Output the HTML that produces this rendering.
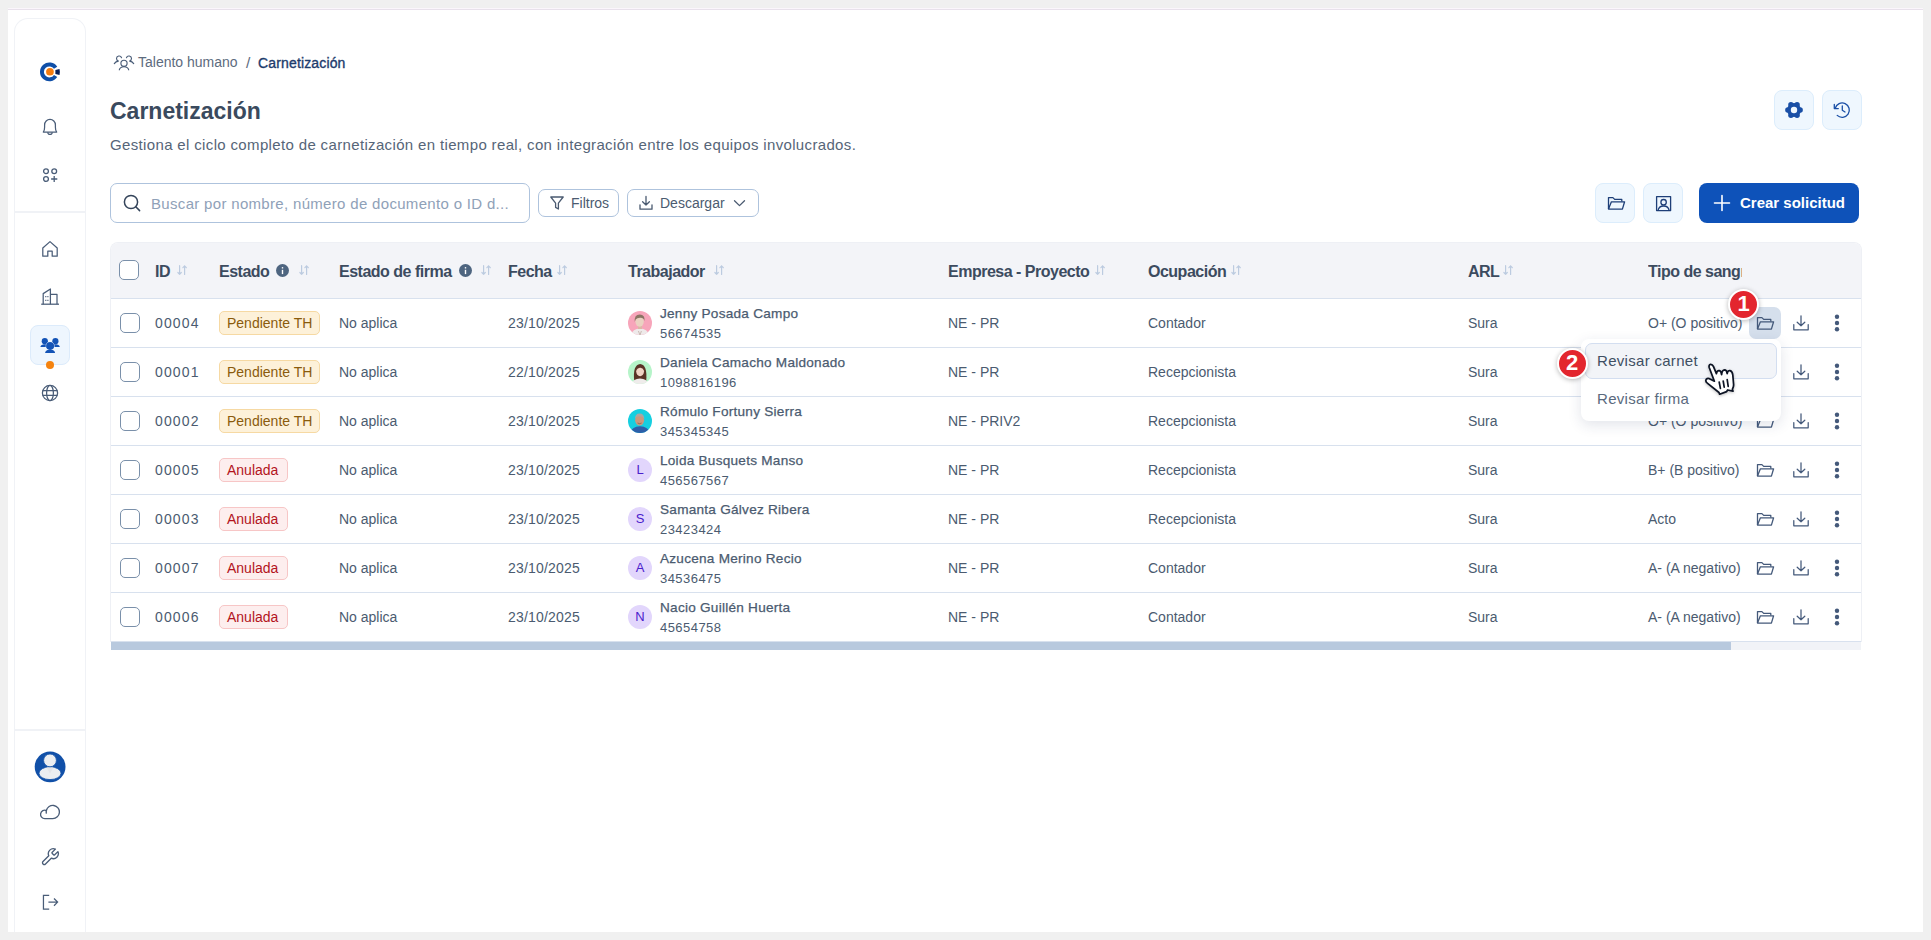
<!DOCTYPE html>
<html><head><meta charset="utf-8">
<style>
*{box-sizing:border-box;margin:0;padding:0}
html,body{width:1931px;height:940px;overflow:hidden;background:#f0f0f0;font-family:"Liberation Sans",sans-serif;color:#4a5a6e}
.abs{position:absolute}
#panel{position:absolute;left:8px;top:8px;width:1915px;height:924px;background:#fff;border-top:1px solid #fbf6fc;overflow:hidden}
#side{position:absolute;left:14px;top:18px;width:72px;height:914px;border:1.5px solid #f0f2f6;border-bottom:none;border-radius:14px 14px 0 0;background:#fff}
.sep{position:absolute;left:15px;width:70px;height:2px;background:#f0f2f6}
.ic{position:absolute;display:block}
.t{position:absolute;white-space:nowrap;line-height:1}
</style></head>
<body>
<div id="panel"><div style="position:absolute;left:0;top:0;width:1915px;height:1px;background:#e8e1eb"></div></div>
<div id="side"></div>
<div class="sep" style="top:211px"></div>
<div class="sep" style="top:729px"></div>

<!-- logo -->
<svg class="ic" style="left:38px;top:59.6px" width="24" height="24" viewBox="0 0 24 24">
  <path d="M19.24 6.71 A9.4 9.4 0 1 0 19.24 17.09 L15.99 14.94 A5.5 5.5 0 1 1 15.99 8.86 Z" fill="#0f4fa8"/>
  <circle cx="11.95" cy="11.75" r="3.85" fill="#f57c0f"/>
  <path d="M17.4 9.9 L21.5 9 Q22.3 12 21.5 15 L17.4 14.1 Z" fill="#071f5a"/>
</svg>
<!-- bell -->
<svg class="ic" style="left:40px;top:116px" width="20" height="20" viewBox="0 0 20 20" fill="none" stroke="#4a5d78" stroke-width="1.25" stroke-linejoin="round">
  <path d="M3.3 16.1 Q4.6 14.6 4.6 11.2 V9 A5.4 5.6 0 0 1 15.4 9 V11.2 Q15.4 14.6 16.7 16.1 Z"/>
  <path d="M7.8 16.2 A2.2 2.2 0 0 0 12.2 16.2"/>
</svg>
<!-- apps -->
<svg class="ic" style="left:40px;top:165px" width="20" height="20" viewBox="0 0 20 20" fill="none" stroke="#4a5d78" stroke-width="1.3">
  <circle cx="6" cy="6.2" r="2.4"/><circle cx="14.2" cy="6.2" r="2.4"/><circle cx="6" cy="14" r="2.4"/>
  <path d="M14.2 10.9 V17.1 M11.1 14 H17.3"/>
</svg>
<!-- home -->
<svg class="ic" style="left:40px;top:239px" width="20" height="20" viewBox="0 0 20 20" fill="none" stroke="#4a5d78" stroke-width="1.25" stroke-linejoin="round">
  <path d="M2.8 9 L10 2.6 L17.2 9 V17.2 H12.2 V12.2 H7.8 V17.2 H2.8 Z"/>
</svg>
<!-- building -->
<svg class="ic" style="left:40px;top:287px" width="20" height="20" viewBox="0 0 20 20" fill="none" stroke="#4a5d78" stroke-width="1.25" stroke-linejoin="round">
  <path d="M1.2 17.2 H19"/>
  <path d="M3.2 17.2 V6.6 L10.4 2 V17.2"/>
  <path d="M10.4 7.4 H17 V17.2"/>
  <path d="M5.8 9 v1.3 M7.9 9 v1.3 M5.8 12.7 v1.3 M7.9 12.7 v1.3" stroke-width="1.1"/>
</svg>
<!-- people active -->
<div class="abs" style="left:30px;top:325px;width:40px;height:40px;border-radius:8px;background:#eef6fe;border:1px solid #dcebfb"></div>
<svg class="ic" style="left:36px;top:332px" width="28" height="28" viewBox="0 0 28 28" fill="#1353b6">
  <circle cx="8.8" cy="9.2" r="3.1"/><circle cx="19.4" cy="9.2" r="3.1"/>
  <path d="M4.4 15 Q4.9 12.2 8.8 12.2 Q11 12.2 12 13.4 L11.4 15 Z"/>
  <path d="M23.8 15 Q23.3 12.2 19.4 12.2 Q17.2 12.2 16.2 13.4 L16.8 15 Z"/>
  <g stroke="#eef6fe" stroke-width="1.3" paint-order="stroke">
  <circle cx="14.1" cy="14.1" r="3.8"/>
  <path d="M9.1 21 Q9.5 17.4 14.1 17.4 Q18.7 17.4 19.1 21 Z"/>
  </g>
  <circle cx="14.1" cy="14.1" r="3.8"/>
</svg>
<div class="abs" style="left:46px;top:361px;width:8px;height:8px;border-radius:50%;background:#f5830f"></div>
<!-- globe -->
<svg class="ic" style="left:40px;top:383px" width="20" height="20" viewBox="0 0 20 20" fill="none" stroke="#4a5d78" stroke-width="1.25">
  <circle cx="10" cy="10" r="7.6"/>
  <ellipse cx="10" cy="10" rx="3.4" ry="7.6"/>
  <path d="M2.6 7.6 H17.4 M2.6 12.4 H17.4"/>
</svg>
<!-- user avatar -->
<svg class="ic" style="left:34px;top:751px" width="32" height="32" viewBox="0 0 32 32">
  <circle cx="16.1" cy="15.8" r="15.4" fill="#1150a8"/>
  <ellipse cx="16" cy="22.2" rx="11" ry="6.4" fill="#eceef1" stroke="#1150a8" stroke-width="0.8"/>
  <path d="M12.5 16.5 L16 22.5 L19.5 16.5 Z" fill="#e4e5e8"/>
  <circle cx="16" cy="9.4" r="6.4" fill="#eceef1" stroke="#1150a8" stroke-width="0.8"/>
</svg>
<!-- cloud -->
<svg class="ic" style="left:40px;top:802px" width="20" height="20" viewBox="0 0 20 20" fill="none" stroke="#4a5d78" stroke-width="1.35" stroke-linejoin="round" stroke-linecap="round">
  <path d="M4.8 16.6 H12.8 A6.6 6.6 0 1 0 6.37 8.51 A4.2 4.2 0 1 0 4.8 16.6 Z"/>
  <path d="M6.37 8.51 A6.6 6.6 0 0 0 6.3 11.1"/>
</svg>
<!-- wrench -->
<svg class="ic" style="left:40.2px;top:847px" width="20" height="20" viewBox="0 0 24 24" fill="none" stroke="#4a5d78" stroke-width="1.6" stroke-linejoin="round" stroke-linecap="round">
  <path d="M14.7 6.3a1 1 0 0 0 0 1.4l1.6 1.6a1 1 0 0 0 1.4 0l3.77-3.77a6 6 0 0 1-7.94 7.94l-6.91 6.91a2.12 2.12 0 0 1-3-3l6.91-6.91a6 6 0 0 1 7.94-7.94l-3.76 3.76z"/>
</svg>
<!-- logout -->
<svg class="ic" style="left:40px;top:892px" width="20" height="20" viewBox="0 0 20 20" fill="none" stroke="#4a5d78" stroke-width="1.25">
  <path d="M9.2 3.45 H3.45 V17 H9.2"/>
  <path d="M8.4 10.1 H17.4 M14 6.5 L17.6 10.1 L14 13.7"/>
</svg>



















<!--MAIN-->
<svg class="ic" style="left:113px;top:54px" width="22" height="18" viewBox="0 0 22 18" fill="none" stroke="#4a5d78" stroke-width="1.15" stroke-linecap="round">
<path d="M8.54 3.71 A2.6 2.6 0 1 0 5.65 7.16 Q2.6 7.5 1.3 9.6"/><path d="M13.46 3.71 A2.6 2.6 0 1 1 16.35 7.16 Q19.4 7.5 20.7 9.6"/>
<circle cx="11" cy="9.3" r="3.1"/><path d="M6.3 15.8 Q7 12.7 11 12.7 Q15 12.7 15.7 15.8"/></svg>
<div class="t" style="left:138px;top:55px;font-size:14px;color:#5d6b7e">Talento humano</div>
<div class="t" style="left:246px;top:55px;font-size:15.5px;color:#5d6b7e">/</div>
<div class="t" style="left:258px;top:55.5px;font-size:14px;letter-spacing:0.15px;-webkit-text-stroke:0.35px #1d3b6c;color:#1d3b6c">Carnetización</div>
<div class="t" style="left:110px;top:100px;font-size:23px;font-weight:bold;color:#3a4a5e">Carnetización</div>
<div class="t" style="left:110px;top:137px;font-size:15px;letter-spacing:0.35px;color:#566578">Gestiona el ciclo completo de carnetización en tiempo real, con integración entre los equipos involucrados.</div>
<div class="abs" style="left:1774px;top:90px;width:40px;height:40px;border-radius:8px;background:#eff7fe;border:1px solid #dcedfc"></div>
<div class="abs" style="left:1822px;top:90px;width:40px;height:40px;border-radius:8px;background:#eff7fe;border:1px solid #dcedfc"></div>
<svg class="ic" style="left:1784px;top:100px" width="20" height="20" viewBox="0 0 20 20"><g fill="#1a4fa6"><circle cx="16.10" cy="10.00" r="2.75"/><circle cx="13.05" cy="15.28" r="2.75"/><circle cx="6.95" cy="15.28" r="2.75"/><circle cx="3.90" cy="10.00" r="2.75"/><circle cx="6.95" cy="4.72" r="2.75"/><circle cx="13.05" cy="4.72" r="2.75"/><circle cx="10" cy="10" r="6.9"/></g><circle cx="10" cy="10" r="3.2" fill="#eff7fe"/></svg>
<svg class="ic" style="left:1832px;top:100px" width="20" height="20" viewBox="0 0 20 20" fill="none" stroke="#1a4fa6" stroke-width="1.3" stroke-linecap="round" stroke-linejoin="round"><path d="M3.2 8.2 A7.2 7.2 0 1 1 5.2 15.4"/><path d="M2.3 4.5 V8.6 H6.3"/><path d="M10.3 6 V10.2 L13 12"/></svg>

<div class="abs" style="left:110px;top:183px;width:420px;height:40px;border-radius:7px;border:1.3px solid #aec3dd"></div>
<svg class="ic" style="left:122px;top:193px" width="20" height="20" viewBox="0 0 20 20" fill="none" stroke="#34445a" stroke-width="1.5" stroke-linecap="round"><circle cx="9" cy="9" r="6.6"/><path d="M13.8 13.8 L17.6 17.6"/></svg>
<div class="t" style="left:151px;top:196px;font-size:15px;letter-spacing:0.32px;color:#8fa1b8">Buscar por nombre, número de documento o ID d...</div>

<div class="abs" style="left:538px;top:189px;width:81px;height:28px;border-radius:7px;border:1.2px solid #aec3dd"></div>
<svg class="ic" style="left:549px;top:195px" width="16" height="16" viewBox="0 0 16 16" fill="none" stroke="#4a5a70" stroke-width="1.3" stroke-linejoin="round"><path d="M1.8 2 H14.2 L9.4 8.2 V14 L6.6 12.4 V8.2 Z"/></svg>
<div class="t" style="left:571px;top:196px;font-size:14px;color:#4b5b70">Filtros</div>
<div class="abs" style="left:627px;top:189px;width:132px;height:28px;border-radius:7px;border:1.2px solid #aec3dd"></div>
<svg class="ic" style="left:638px;top:195px" width="16" height="16" viewBox="0 0 16 16" fill="none" stroke="#4a5a70" stroke-width="1.3" stroke-linecap="round" stroke-linejoin="round"><path d="M8 1.5 V10 M4.6 6.8 L8 10 L11.4 6.8"/><path d="M2 9.8 V14.2 H14 V9.8"/></svg>
<div class="t" style="left:660px;top:196px;font-size:14px;color:#4b5b70">Descargar</div>
<svg class="ic" style="left:733px;top:197px" width="13" height="12" viewBox="0 0 13 12" fill="none" stroke="#4a5a70" stroke-width="1.3" stroke-linecap="round" stroke-linejoin="round"><path d="M1.5 3.8 L6.5 8.6 L11.5 3.8"/></svg>

<div class="abs" style="left:1595px;top:183px;width:40px;height:40px;border-radius:8px;background:#eff7fe;border:1px solid #dcedfc"></div>
<div class="abs" style="left:1643px;top:183px;width:40px;height:40px;border-radius:8px;background:#eff7fe;border:1px solid #dcedfc"></div>
<svg class="ic" style="left:1605.5px;top:193.3px" width="20" height="20" viewBox="0 0 20 20" fill="none" stroke="#1e3f78" stroke-width="1.3" stroke-linejoin="round"><path d="M2.5 16.1 V4.6 H6.9 L8.7 6.4 H15.8 V8.4"/><path d="M2.5 16.1 L5.4 8.8 H18.6 L16.4 16.1 Z"/></svg>
<svg class="ic" style="left:1653px;top:193px" width="20" height="20" viewBox="0 0 20 20" fill="none" stroke="#1e3f78" stroke-width="1.3" stroke-linejoin="round"><rect x="3.6" y="3.6" width="14" height="14"/><circle cx="10.6" cy="9.2" r="2.7"/><path d="M5 17.6 Q5.8 13 10.6 13 Q15.4 13 16.2 17.6"/></svg>
<div class="abs" style="left:1699px;top:183px;width:160px;height:40px;border-radius:8px;background:#0e52b9"></div>
<svg class="ic" style="left:1713px;top:194px" width="18" height="18" viewBox="0 0 18 18" fill="none" stroke="#fff" stroke-width="1.6" stroke-linecap="round"><path d="M9 1.5 V16.5 M1.5 9 H16.5"/></svg>
<div class="t" style="left:1740px;top:195px;font-size:15px;font-weight:bold;color:#fff">Crear solicitud</div>

<div class="abs" style="left:110px;top:242px;width:1752px;height:400px;border:1.5px solid #eef0f5;border-bottom:none;border-radius:8px 8px 0 0;overflow:hidden">
<div class="abs" style="left:0;top:0;width:1752px;height:56px;background:#f3f4f8;border-bottom:1px solid #d8e1ee"></div>
</div>
<div class="abs" style="left:111px;top:642px;width:1750px;height:8px;background:#f1f3f7"></div>
<div class="abs" style="left:111px;top:642px;width:1620px;height:8px;background:#b8c9de"></div>

<div class="abs" style="left:119px;top:260px;width:20px;height:20px;border-radius:5px;border:1.5px solid #7a90aa;background:#fff"></div>
<div class="t" style="left:155px;top:263.5px;font-size:16px;letter-spacing:-0.5px;font-weight:bold;color:#3c4b5f">ID</div>
<svg class="ic" style="left:177px;top:265px" width="11" height="11" viewBox="0 0 11 11" fill="none" stroke="#bccbe0" stroke-width="1.2" stroke-linecap="round" stroke-linejoin="round"><path d="M2.6 .7 V9.3 M.9 7.5 L2.6 9.3 L4.3 7.5"/><path d="M7.6 9.5 V.9 M5.9 2.7 L7.6 .9 L9.3 2.7"/></svg>
<div class="t" style="left:219px;top:263.5px;font-size:16px;letter-spacing:-0.5px;font-weight:bold;color:#3c4b5f">Estado</div>
<svg class="ic" style="left:299px;top:265px" width="11" height="11" viewBox="0 0 11 11" fill="none" stroke="#bccbe0" stroke-width="1.2" stroke-linecap="round" stroke-linejoin="round"><path d="M2.6 .7 V9.3 M.9 7.5 L2.6 9.3 L4.3 7.5"/><path d="M7.6 9.5 V.9 M5.9 2.7 L7.6 .9 L9.3 2.7"/></svg>
<svg class="ic" style="left:276px;top:264px" width="13" height="13" viewBox="0 0 13 13"><circle cx="6.5" cy="6.5" r="6.5" fill="#4e6580"/><rect x="5.8" y="5.8" width="1.4" height="4.3" fill="#fff"/><rect x="5.8" y="3.1" width="1.4" height="1.4" fill="#fff"/></svg>
<div class="t" style="left:339px;top:263.5px;font-size:16px;letter-spacing:-0.5px;font-weight:bold;color:#3c4b5f">Estado de firma</div>
<svg class="ic" style="left:481px;top:265px" width="11" height="11" viewBox="0 0 11 11" fill="none" stroke="#bccbe0" stroke-width="1.2" stroke-linecap="round" stroke-linejoin="round"><path d="M2.6 .7 V9.3 M.9 7.5 L2.6 9.3 L4.3 7.5"/><path d="M7.6 9.5 V.9 M5.9 2.7 L7.6 .9 L9.3 2.7"/></svg>
<svg class="ic" style="left:459px;top:264px" width="13" height="13" viewBox="0 0 13 13"><circle cx="6.5" cy="6.5" r="6.5" fill="#4e6580"/><rect x="5.8" y="5.8" width="1.4" height="4.3" fill="#fff"/><rect x="5.8" y="3.1" width="1.4" height="1.4" fill="#fff"/></svg>
<div class="t" style="left:508px;top:263.5px;font-size:16px;letter-spacing:-0.5px;font-weight:bold;color:#3c4b5f">Fecha</div>
<svg class="ic" style="left:557px;top:265px" width="11" height="11" viewBox="0 0 11 11" fill="none" stroke="#bccbe0" stroke-width="1.2" stroke-linecap="round" stroke-linejoin="round"><path d="M2.6 .7 V9.3 M.9 7.5 L2.6 9.3 L4.3 7.5"/><path d="M7.6 9.5 V.9 M5.9 2.7 L7.6 .9 L9.3 2.7"/></svg>
<div class="t" style="left:628px;top:263.5px;font-size:16px;letter-spacing:-0.5px;font-weight:bold;color:#3c4b5f">Trabajador</div>
<svg class="ic" style="left:714px;top:265px" width="11" height="11" viewBox="0 0 11 11" fill="none" stroke="#bccbe0" stroke-width="1.2" stroke-linecap="round" stroke-linejoin="round"><path d="M2.6 .7 V9.3 M.9 7.5 L2.6 9.3 L4.3 7.5"/><path d="M7.6 9.5 V.9 M5.9 2.7 L7.6 .9 L9.3 2.7"/></svg>
<div class="t" style="left:948px;top:263.5px;font-size:16px;letter-spacing:-0.5px;font-weight:bold;color:#3c4b5f">Empresa - Proyecto</div>
<svg class="ic" style="left:1095px;top:265px" width="11" height="11" viewBox="0 0 11 11" fill="none" stroke="#bccbe0" stroke-width="1.2" stroke-linecap="round" stroke-linejoin="round"><path d="M2.6 .7 V9.3 M.9 7.5 L2.6 9.3 L4.3 7.5"/><path d="M7.6 9.5 V.9 M5.9 2.7 L7.6 .9 L9.3 2.7"/></svg>
<div class="t" style="left:1148px;top:263.5px;font-size:16px;letter-spacing:-0.5px;font-weight:bold;color:#3c4b5f">Ocupación</div>
<svg class="ic" style="left:1231px;top:265px" width="11" height="11" viewBox="0 0 11 11" fill="none" stroke="#bccbe0" stroke-width="1.2" stroke-linecap="round" stroke-linejoin="round"><path d="M2.6 .7 V9.3 M.9 7.5 L2.6 9.3 L4.3 7.5"/><path d="M7.6 9.5 V.9 M5.9 2.7 L7.6 .9 L9.3 2.7"/></svg>
<div class="t" style="left:1468px;top:263.5px;font-size:16px;letter-spacing:-0.5px;font-weight:bold;color:#3c4b5f">ARL</div>
<svg class="ic" style="left:1503px;top:265px" width="11" height="11" viewBox="0 0 11 11" fill="none" stroke="#bccbe0" stroke-width="1.2" stroke-linecap="round" stroke-linejoin="round"><path d="M2.6 .7 V9.3 M.9 7.5 L2.6 9.3 L4.3 7.5"/><path d="M7.6 9.5 V.9 M5.9 2.7 L7.6 .9 L9.3 2.7"/></svg>
<div class="t" style="left:1648px;top:263.5px;width:94px;overflow:hidden;font-size:16px;letter-spacing:-0.5px;font-weight:bold;color:#3c4b5f">Tipo de sangı</div>
<div class="abs" style="left:111px;top:347px;width:1750px;height:1px;background:#d8e1ee"></div>
<div class="abs" style="left:120px;top:313px;width:20px;height:20px;border-radius:5px;border:1.5px solid #7a90aa;background:#fff"></div>
<div class="t" style="left:155px;top:316px;font-size:14px;letter-spacing:1.15px;color:#4b5b70">00004</div>
<div class="abs" style="left:219px;top:311px;width:101px;height:24px;border-radius:5px;background:#fdf1d9;border:1px solid #f6d9a3"></div>
<div class="t" style="left:227px;top:316px;font-size:14px;color:#8a5b0c">Pendiente TH</div>
<div class="t" style="left:339px;top:316px;font-size:14px;color:#4b5b70">No aplica</div>
<div class="t" style="left:508px;top:316px;font-size:14px;letter-spacing:0.2px;color:#4b5b70">23/10/2025</div>
<svg class="ic" style="left:628px;top:311px" width="24" height="24" viewBox="0 0 24 24"><defs><clipPath id="c0"><circle cx="12" cy="12" r="12"/></clipPath></defs><g clip-path="url(#c0)"><rect width="24" height="24" fill="#f7a5ba"/><path d="M3 24 Q4.5 18 12 17.6 Q19.5 18 21 24 Z" fill="#eeeaea"/><rect x="10" y="13" width="4" height="5" fill="#dcb8a6"/><ellipse cx="11.6" cy="10.6" rx="4.2" ry="5.1" fill="#ead2c2"/><path d="M6.8 11 Q6 3.6 11.8 3.6 Q17.2 3.6 16.6 10.5 Q16 6.5 12 6.8 Q9 6.8 7.6 8.5 Z" fill="#8a7564"/><path d="M10.4 20 L12 24 L13.4 20" stroke="#b69c90" stroke-width="0.6" fill="none"/></g></svg>
<div class="t" style="left:660px;top:307px;font-size:13.6px;letter-spacing:0.25px;-webkit-text-stroke:0.25px #4b5b70;color:#4b5b70">Jenny Posada Campo</div>
<div class="t" style="left:660px;top:327px;font-size:13px;letter-spacing:0.45px;color:#4b5b70">56674535</div>
<div class="t" style="left:948px;top:316px;font-size:14px;color:#4b5b70">NE - PR</div>
<div class="t" style="left:1148px;top:316px;font-size:14px;color:#4b5b70">Contador</div>
<div class="t" style="left:1468px;top:316px;font-size:14px;color:#4b5b70">Sura</div>
<div class="t" style="left:1648px;top:316px;font-size:14px;color:#4b5b70">O+ (O positivo)</div>
<div class="abs" style="left:1749px;top:307px;width:32px;height:32px;border-radius:7px;background:#d5dfec"></div>
<svg class="ic" style="left:1755px;top:313px" width="20" height="20" viewBox="0 0 20 20" fill="none" stroke="#44597a" stroke-width="1.3" stroke-linejoin="round"><path d="M2.5 16.1 V4.6 H6.9 L8.7 6.4 H15.8 V8.4"/><path d="M2.5 16.1 L5.4 8.8 H18.6 L16.4 16.1 Z"/></svg>
<svg class="ic" style="left:1791px;top:313.5px" width="20" height="20" viewBox="0 0 20 20" fill="none" stroke="#44597a" stroke-width="1.25" stroke-linecap="round" stroke-linejoin="round"><path d="M10 1.8 V11.8 M6.2 8.2 L10 11.8 L13.8 8.2"/><path d="M2.8 10.6 V15.8 H17.2 V10.6"/></svg>
<svg class="ic" style="left:1827px;top:313.3px" width="20" height="20" viewBox="0 0 20 20" fill="#44597a"><circle cx="10" cy="3.8" r="2.2"/><circle cx="10" cy="10" r="2.2"/><circle cx="10" cy="16.2" r="2.2"/></svg>
<div class="abs" style="left:111px;top:396px;width:1750px;height:1px;background:#d8e1ee"></div>
<div class="abs" style="left:120px;top:362px;width:20px;height:20px;border-radius:5px;border:1.5px solid #7a90aa;background:#fff"></div>
<div class="t" style="left:155px;top:365px;font-size:14px;letter-spacing:1.15px;color:#4b5b70">00001</div>
<div class="abs" style="left:219px;top:360px;width:101px;height:24px;border-radius:5px;background:#fdf1d9;border:1px solid #f6d9a3"></div>
<div class="t" style="left:227px;top:365px;font-size:14px;color:#8a5b0c">Pendiente TH</div>
<div class="t" style="left:339px;top:365px;font-size:14px;color:#4b5b70">No aplica</div>
<div class="t" style="left:508px;top:365px;font-size:14px;letter-spacing:0.2px;color:#4b5b70">22/10/2025</div>
<svg class="ic" style="left:628px;top:360px" width="24" height="24" viewBox="0 0 24 24"><defs><clipPath id="c1"><circle cx="12" cy="12" r="12"/></clipPath></defs><g clip-path="url(#c1)"><rect width="24" height="24" fill="#b6f4c9"/><path d="M6.2 21 Q4.6 4.6 12.2 4 Q19.6 4.6 18.2 21 Z" fill="#5a3326"/><path d="M3.5 24 Q5 19 12 18.6 Q19 19 20.5 24 Z" fill="#efeceb"/><ellipse cx="12.1" cy="11.2" rx="3.9" ry="5" fill="#f1d3c4"/><path d="M8 10.5 Q8 5.6 12.2 5.6 Q16.2 5.6 16.2 10.5 Q14.5 7.6 12.2 7.8 Q9.8 7.6 8 10.5 Z" fill="#5a3326"/></g></svg>
<div class="t" style="left:660px;top:356px;font-size:13.6px;letter-spacing:0.25px;-webkit-text-stroke:0.25px #4b5b70;color:#4b5b70">Daniela Camacho Maldonado</div>
<div class="t" style="left:660px;top:376px;font-size:13px;letter-spacing:0.45px;color:#4b5b70">1098816196</div>
<div class="t" style="left:948px;top:365px;font-size:14px;color:#4b5b70">NE - PR</div>
<div class="t" style="left:1148px;top:365px;font-size:14px;color:#4b5b70">Recepcionista</div>
<div class="t" style="left:1468px;top:365px;font-size:14px;color:#4b5b70">Sura</div>
<div class="t" style="left:1648px;top:365px;font-size:14px;color:#4b5b70">O+ (O positivo)</div>
<svg class="ic" style="left:1755px;top:362px" width="20" height="20" viewBox="0 0 20 20" fill="none" stroke="#44597a" stroke-width="1.3" stroke-linejoin="round"><path d="M2.5 16.1 V4.6 H6.9 L8.7 6.4 H15.8 V8.4"/><path d="M2.5 16.1 L5.4 8.8 H18.6 L16.4 16.1 Z"/></svg>
<svg class="ic" style="left:1791px;top:362.5px" width="20" height="20" viewBox="0 0 20 20" fill="none" stroke="#44597a" stroke-width="1.25" stroke-linecap="round" stroke-linejoin="round"><path d="M10 1.8 V11.8 M6.2 8.2 L10 11.8 L13.8 8.2"/><path d="M2.8 10.6 V15.8 H17.2 V10.6"/></svg>
<svg class="ic" style="left:1827px;top:362.3px" width="20" height="20" viewBox="0 0 20 20" fill="#44597a"><circle cx="10" cy="3.8" r="2.2"/><circle cx="10" cy="10" r="2.2"/><circle cx="10" cy="16.2" r="2.2"/></svg>
<div class="abs" style="left:111px;top:445px;width:1750px;height:1px;background:#d8e1ee"></div>
<div class="abs" style="left:120px;top:411px;width:20px;height:20px;border-radius:5px;border:1.5px solid #7a90aa;background:#fff"></div>
<div class="t" style="left:155px;top:414px;font-size:14px;letter-spacing:1.15px;color:#4b5b70">00002</div>
<div class="abs" style="left:219px;top:409px;width:101px;height:24px;border-radius:5px;background:#fdf1d9;border:1px solid #f6d9a3"></div>
<div class="t" style="left:227px;top:414px;font-size:14px;color:#8a5b0c">Pendiente TH</div>
<div class="t" style="left:339px;top:414px;font-size:14px;color:#4b5b70">No aplica</div>
<div class="t" style="left:508px;top:414px;font-size:14px;letter-spacing:0.2px;color:#4b5b70">23/10/2025</div>
<svg class="ic" style="left:628px;top:409px" width="24" height="24" viewBox="0 0 24 24"><defs><clipPath id="c2"><circle cx="12" cy="12" r="12"/></clipPath></defs><g clip-path="url(#c2)"><rect width="24" height="24" fill="#16cfe0"/><path d="M2 24 Q3.5 17.6 12 17.2 Q20.5 17.6 22 24 Z" fill="#2d5fa8"/><ellipse cx="11.6" cy="11.2" rx="4.5" ry="5.3" fill="#c9987e"/><path d="M6.9 10 Q7 4.4 11.6 4.4 Q16.3 4.4 16.3 10 Q15 7.2 11.6 7.3 Q8.2 7.2 6.9 10 Z" fill="#aaa6a3"/><path d="M9.6 14 Q11.6 15.4 13.6 14" stroke="#7a5040" stroke-width="0.6" fill="none"/></g></svg>
<div class="t" style="left:660px;top:405px;font-size:13.6px;letter-spacing:0.25px;-webkit-text-stroke:0.25px #4b5b70;color:#4b5b70">Rómulo Fortuny Sierra</div>
<div class="t" style="left:660px;top:425px;font-size:13px;letter-spacing:0.45px;color:#4b5b70">345345345</div>
<div class="t" style="left:948px;top:414px;font-size:14px;color:#4b5b70">NE - PRIV2</div>
<div class="t" style="left:1148px;top:414px;font-size:14px;color:#4b5b70">Recepcionista</div>
<div class="t" style="left:1468px;top:414px;font-size:14px;color:#4b5b70">Sura</div>
<div class="t" style="left:1648px;top:414px;font-size:14px;color:#4b5b70">O+ (O positivo)</div>
<svg class="ic" style="left:1755px;top:411px" width="20" height="20" viewBox="0 0 20 20" fill="none" stroke="#44597a" stroke-width="1.3" stroke-linejoin="round"><path d="M2.5 16.1 V4.6 H6.9 L8.7 6.4 H15.8 V8.4"/><path d="M2.5 16.1 L5.4 8.8 H18.6 L16.4 16.1 Z"/></svg>
<svg class="ic" style="left:1791px;top:411.5px" width="20" height="20" viewBox="0 0 20 20" fill="none" stroke="#44597a" stroke-width="1.25" stroke-linecap="round" stroke-linejoin="round"><path d="M10 1.8 V11.8 M6.2 8.2 L10 11.8 L13.8 8.2"/><path d="M2.8 10.6 V15.8 H17.2 V10.6"/></svg>
<svg class="ic" style="left:1827px;top:411.3px" width="20" height="20" viewBox="0 0 20 20" fill="#44597a"><circle cx="10" cy="3.8" r="2.2"/><circle cx="10" cy="10" r="2.2"/><circle cx="10" cy="16.2" r="2.2"/></svg>
<div class="abs" style="left:111px;top:494px;width:1750px;height:1px;background:#d8e1ee"></div>
<div class="abs" style="left:120px;top:460px;width:20px;height:20px;border-radius:5px;border:1.5px solid #7a90aa;background:#fff"></div>
<div class="t" style="left:155px;top:463px;font-size:14px;letter-spacing:1.15px;color:#4b5b70">00005</div>
<div class="abs" style="left:219px;top:458px;width:69px;height:24px;border-radius:5px;background:#fdeeee;border:1px solid #f7c6c6"></div>
<div class="t" style="left:227px;top:463px;font-size:14px;color:#b3141d">Anulada</div>
<div class="t" style="left:339px;top:463px;font-size:14px;color:#4b5b70">No aplica</div>
<div class="t" style="left:508px;top:463px;font-size:14px;letter-spacing:0.2px;color:#4b5b70">23/10/2025</div>
<div class="abs" style="left:628px;top:458px;width:24px;height:24px;border-radius:50%;background:#e2d6fc;color:#4a20cc;font-size:13px;line-height:23px;text-align:center">L</div>
<div class="t" style="left:660px;top:454px;font-size:13.6px;letter-spacing:0.25px;-webkit-text-stroke:0.25px #4b5b70;color:#4b5b70">Loida Busquets Manso</div>
<div class="t" style="left:660px;top:474px;font-size:13px;letter-spacing:0.45px;color:#4b5b70">456567567</div>
<div class="t" style="left:948px;top:463px;font-size:14px;color:#4b5b70">NE - PR</div>
<div class="t" style="left:1148px;top:463px;font-size:14px;color:#4b5b70">Recepcionista</div>
<div class="t" style="left:1468px;top:463px;font-size:14px;color:#4b5b70">Sura</div>
<div class="t" style="left:1648px;top:463px;font-size:14px;color:#4b5b70">B+ (B positivo)</div>
<svg class="ic" style="left:1755px;top:460px" width="20" height="20" viewBox="0 0 20 20" fill="none" stroke="#44597a" stroke-width="1.3" stroke-linejoin="round"><path d="M2.5 16.1 V4.6 H6.9 L8.7 6.4 H15.8 V8.4"/><path d="M2.5 16.1 L5.4 8.8 H18.6 L16.4 16.1 Z"/></svg>
<svg class="ic" style="left:1791px;top:460.5px" width="20" height="20" viewBox="0 0 20 20" fill="none" stroke="#44597a" stroke-width="1.25" stroke-linecap="round" stroke-linejoin="round"><path d="M10 1.8 V11.8 M6.2 8.2 L10 11.8 L13.8 8.2"/><path d="M2.8 10.6 V15.8 H17.2 V10.6"/></svg>
<svg class="ic" style="left:1827px;top:460.3px" width="20" height="20" viewBox="0 0 20 20" fill="#44597a"><circle cx="10" cy="3.8" r="2.2"/><circle cx="10" cy="10" r="2.2"/><circle cx="10" cy="16.2" r="2.2"/></svg>
<div class="abs" style="left:111px;top:543px;width:1750px;height:1px;background:#d8e1ee"></div>
<div class="abs" style="left:120px;top:509px;width:20px;height:20px;border-radius:5px;border:1.5px solid #7a90aa;background:#fff"></div>
<div class="t" style="left:155px;top:512px;font-size:14px;letter-spacing:1.15px;color:#4b5b70">00003</div>
<div class="abs" style="left:219px;top:507px;width:69px;height:24px;border-radius:5px;background:#fdeeee;border:1px solid #f7c6c6"></div>
<div class="t" style="left:227px;top:512px;font-size:14px;color:#b3141d">Anulada</div>
<div class="t" style="left:339px;top:512px;font-size:14px;color:#4b5b70">No aplica</div>
<div class="t" style="left:508px;top:512px;font-size:14px;letter-spacing:0.2px;color:#4b5b70">23/10/2025</div>
<div class="abs" style="left:628px;top:507px;width:24px;height:24px;border-radius:50%;background:#e2d6fc;color:#4a20cc;font-size:13px;line-height:23px;text-align:center">S</div>
<div class="t" style="left:660px;top:503px;font-size:13.6px;letter-spacing:0.25px;-webkit-text-stroke:0.25px #4b5b70;color:#4b5b70">Samanta Gálvez Ribera</div>
<div class="t" style="left:660px;top:523px;font-size:13px;letter-spacing:0.45px;color:#4b5b70">23423424</div>
<div class="t" style="left:948px;top:512px;font-size:14px;color:#4b5b70">NE - PR</div>
<div class="t" style="left:1148px;top:512px;font-size:14px;color:#4b5b70">Recepcionista</div>
<div class="t" style="left:1468px;top:512px;font-size:14px;color:#4b5b70">Sura</div>
<div class="t" style="left:1648px;top:512px;font-size:14px;color:#4b5b70">Acto</div>
<svg class="ic" style="left:1755px;top:509px" width="20" height="20" viewBox="0 0 20 20" fill="none" stroke="#44597a" stroke-width="1.3" stroke-linejoin="round"><path d="M2.5 16.1 V4.6 H6.9 L8.7 6.4 H15.8 V8.4"/><path d="M2.5 16.1 L5.4 8.8 H18.6 L16.4 16.1 Z"/></svg>
<svg class="ic" style="left:1791px;top:509.5px" width="20" height="20" viewBox="0 0 20 20" fill="none" stroke="#44597a" stroke-width="1.25" stroke-linecap="round" stroke-linejoin="round"><path d="M10 1.8 V11.8 M6.2 8.2 L10 11.8 L13.8 8.2"/><path d="M2.8 10.6 V15.8 H17.2 V10.6"/></svg>
<svg class="ic" style="left:1827px;top:509.3px" width="20" height="20" viewBox="0 0 20 20" fill="#44597a"><circle cx="10" cy="3.8" r="2.2"/><circle cx="10" cy="10" r="2.2"/><circle cx="10" cy="16.2" r="2.2"/></svg>
<div class="abs" style="left:111px;top:592px;width:1750px;height:1px;background:#d8e1ee"></div>
<div class="abs" style="left:120px;top:558px;width:20px;height:20px;border-radius:5px;border:1.5px solid #7a90aa;background:#fff"></div>
<div class="t" style="left:155px;top:561px;font-size:14px;letter-spacing:1.15px;color:#4b5b70">00007</div>
<div class="abs" style="left:219px;top:556px;width:69px;height:24px;border-radius:5px;background:#fdeeee;border:1px solid #f7c6c6"></div>
<div class="t" style="left:227px;top:561px;font-size:14px;color:#b3141d">Anulada</div>
<div class="t" style="left:339px;top:561px;font-size:14px;color:#4b5b70">No aplica</div>
<div class="t" style="left:508px;top:561px;font-size:14px;letter-spacing:0.2px;color:#4b5b70">23/10/2025</div>
<div class="abs" style="left:628px;top:556px;width:24px;height:24px;border-radius:50%;background:#e2d6fc;color:#4a20cc;font-size:13px;line-height:23px;text-align:center">A</div>
<div class="t" style="left:660px;top:552px;font-size:13.6px;letter-spacing:0.25px;-webkit-text-stroke:0.25px #4b5b70;color:#4b5b70">Azucena Merino Recio</div>
<div class="t" style="left:660px;top:572px;font-size:13px;letter-spacing:0.45px;color:#4b5b70">34536475</div>
<div class="t" style="left:948px;top:561px;font-size:14px;color:#4b5b70">NE - PR</div>
<div class="t" style="left:1148px;top:561px;font-size:14px;color:#4b5b70">Contador</div>
<div class="t" style="left:1468px;top:561px;font-size:14px;color:#4b5b70">Sura</div>
<div class="t" style="left:1648px;top:561px;font-size:14px;color:#4b5b70">A- (A negativo)</div>
<svg class="ic" style="left:1755px;top:558px" width="20" height="20" viewBox="0 0 20 20" fill="none" stroke="#44597a" stroke-width="1.3" stroke-linejoin="round"><path d="M2.5 16.1 V4.6 H6.9 L8.7 6.4 H15.8 V8.4"/><path d="M2.5 16.1 L5.4 8.8 H18.6 L16.4 16.1 Z"/></svg>
<svg class="ic" style="left:1791px;top:558.5px" width="20" height="20" viewBox="0 0 20 20" fill="none" stroke="#44597a" stroke-width="1.25" stroke-linecap="round" stroke-linejoin="round"><path d="M10 1.8 V11.8 M6.2 8.2 L10 11.8 L13.8 8.2"/><path d="M2.8 10.6 V15.8 H17.2 V10.6"/></svg>
<svg class="ic" style="left:1827px;top:558.3px" width="20" height="20" viewBox="0 0 20 20" fill="#44597a"><circle cx="10" cy="3.8" r="2.2"/><circle cx="10" cy="10" r="2.2"/><circle cx="10" cy="16.2" r="2.2"/></svg>
<div class="abs" style="left:111px;top:641px;width:1750px;height:1px;background:#d8e1ee"></div>
<div class="abs" style="left:120px;top:607px;width:20px;height:20px;border-radius:5px;border:1.5px solid #7a90aa;background:#fff"></div>
<div class="t" style="left:155px;top:610px;font-size:14px;letter-spacing:1.15px;color:#4b5b70">00006</div>
<div class="abs" style="left:219px;top:605px;width:69px;height:24px;border-radius:5px;background:#fdeeee;border:1px solid #f7c6c6"></div>
<div class="t" style="left:227px;top:610px;font-size:14px;color:#b3141d">Anulada</div>
<div class="t" style="left:339px;top:610px;font-size:14px;color:#4b5b70">No aplica</div>
<div class="t" style="left:508px;top:610px;font-size:14px;letter-spacing:0.2px;color:#4b5b70">23/10/2025</div>
<div class="abs" style="left:628px;top:605px;width:24px;height:24px;border-radius:50%;background:#e2d6fc;color:#4a20cc;font-size:13px;line-height:23px;text-align:center">N</div>
<div class="t" style="left:660px;top:601px;font-size:13.6px;letter-spacing:0.25px;-webkit-text-stroke:0.25px #4b5b70;color:#4b5b70">Nacio Guillén Huerta</div>
<div class="t" style="left:660px;top:621px;font-size:13px;letter-spacing:0.45px;color:#4b5b70">45654758</div>
<div class="t" style="left:948px;top:610px;font-size:14px;color:#4b5b70">NE - PR</div>
<div class="t" style="left:1148px;top:610px;font-size:14px;color:#4b5b70">Contador</div>
<div class="t" style="left:1468px;top:610px;font-size:14px;color:#4b5b70">Sura</div>
<div class="t" style="left:1648px;top:610px;font-size:14px;color:#4b5b70">A- (A negativo)</div>
<svg class="ic" style="left:1755px;top:607px" width="20" height="20" viewBox="0 0 20 20" fill="none" stroke="#44597a" stroke-width="1.3" stroke-linejoin="round"><path d="M2.5 16.1 V4.6 H6.9 L8.7 6.4 H15.8 V8.4"/><path d="M2.5 16.1 L5.4 8.8 H18.6 L16.4 16.1 Z"/></svg>
<svg class="ic" style="left:1791px;top:607.5px" width="20" height="20" viewBox="0 0 20 20" fill="none" stroke="#44597a" stroke-width="1.25" stroke-linecap="round" stroke-linejoin="round"><path d="M10 1.8 V11.8 M6.2 8.2 L10 11.8 L13.8 8.2"/><path d="M2.8 10.6 V15.8 H17.2 V10.6"/></svg>
<svg class="ic" style="left:1827px;top:607.3px" width="20" height="20" viewBox="0 0 20 20" fill="#44597a"><circle cx="10" cy="3.8" r="2.2"/><circle cx="10" cy="10" r="2.2"/><circle cx="10" cy="16.2" r="2.2"/></svg>
<div class="abs" style="left:1581px;top:339px;width:200px;height:82px;border-radius:8px;background:#fff;box-shadow:0 4px 14px rgba(30,50,90,0.13)"></div>
<div class="abs" style="left:1585px;top:343px;width:192px;height:36px;border-radius:7px;background:#f2f4f8;border:1px solid #d3def0"></div>
<div class="t" style="left:1597px;top:353px;font-size:15px;letter-spacing:0.3px;color:#3f4f63">Revisar carnet</div>
<div class="t" style="left:1597px;top:391px;font-size:15px;letter-spacing:0.3px;color:#5a6a7e">Revisar firma</div>

<div class="abs" style="left:1728.0px;top:288.5px;width:31px;height:31px;border-radius:50%;background:#e3262e;border:2.5px solid #fff;box-shadow:0 1px 5px rgba(0,0,0,0.28);color:#fff;font-weight:bold;font-size:22px;line-height:26px;text-align:center">1</div>
<div class="abs" style="left:1556.5px;top:348.0px;width:31px;height:31px;border-radius:50%;background:#e3262e;border:2.5px solid #fff;box-shadow:0 1px 5px rgba(0,0,0,0.28);color:#fff;font-weight:bold;font-size:22px;line-height:26px;text-align:center">2</div>
<svg class="ic" style="left:1700px;top:356px;filter:drop-shadow(0 1.5px 1.5px rgba(0,0,0,0.25))" width="40" height="45" viewBox="0 0 40 45">
<path d="M14.4 25.2 L9.2 11.5 Q8.6 8.6 10.6 8.3 Q12.4 8.2 13.4 10.4 L16.4 17.6 Q17 14.2 19.4 14.6 Q21.2 15 21.6 18.6 Q22 14 24.6 13.8 Q26.8 13.8 27.2 17.6 Q27.8 14.2 30 14.6 Q32.4 15.2 32.8 19 L33.6 28.5 Q33.8 31 32.4 33.2 L33 35.2 L27.6 34 L26.6 35.6 L19.6 38.2 L19 36.5 L7.6 27.4 Q5 25.6 6.2 23.4 Q7.8 21.6 10.4 23.2 Z" fill="#fff" stroke="#0d1424" stroke-width="1.75" stroke-linejoin="round"/>
<path d="M19.2 26 L20.4 32.4 M23.2 25 L24.2 31.2 M27.2 23.6 L28.2 30.4" stroke="#0d1424" stroke-width="1.7" stroke-linecap="round"/>
</svg>
<!--/MAIN-->
</body></html>
